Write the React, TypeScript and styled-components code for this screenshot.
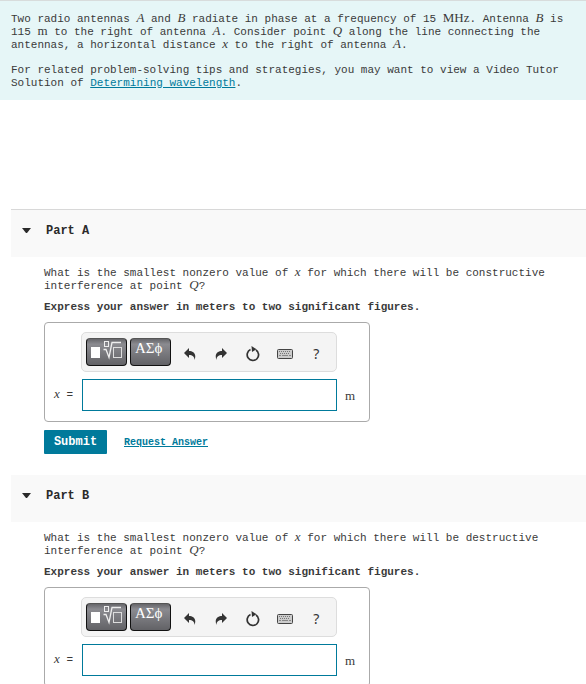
import React from "react";
import styled, { createGlobalStyle } from "styled-components";

const teal = "#007a9b";
const mono = `"Liberation Mono", "DejaVu Sans Mono", monospace`;
const serif = `"Liberation Serif", "Times New Roman", serif`;

const GlobalStyle = createGlobalStyle`
  *, *::before, *::after { box-sizing: border-box; }
  body {
    margin: 0;
    background: #fff;
    color: #3a3a3a;
    font-family: ${mono};
    font-size: 11px;
    line-height: 13px;
  }
  p, h2 { margin: 0; }
`;

const Page = styled.main`
  display: flex;
  flex-direction: column;
`;

const Intro = styled.section`
  display: flex;
  flex-direction: column;
  gap: 12px;
  padding: 12px 11px 10px;
  border-top: 1px solid #d8dcdc;
  background: #e6f6f7;
`;

const Link = styled.a`
  color: ${teal};
  text-decoration: underline;
`;

const Var = styled.i`
  font-family: ${serif};
  font-size: 13px;
  line-height: 1px;
`;

const Unit = styled.span`
  font-family: ${serif};
  font-size: 13px;
  line-height: 1px;
`;

const Parts = styled.div`
  display: flex;
  flex-direction: column;
  gap: 21px;
  margin-top: 109px;
  padding-left: 11px;
`;

const PartHeader = styled.header<{ $ruled?: boolean }>`
  padding: 14px 11px 19px;
  border-top: ${(p) => (p.$ruled ? "1px solid #d8d8d8" : "none")};
  background: #f9f9f9;
`;

const Toggle = styled.button`
  display: flex;
  align-items: center;
  gap: 15px;
  padding: 0;
  border: 0;
  background: none;
  color: #2a2a2a;
  font: bold 12px/14px ${mono};
  cursor: pointer;
`;

const PartBody = styled.div`
  display: flex;
  flex-direction: column;
  align-items: flex-start;
  padding: 10px 11px 0 33px;
`;

const Instruction = styled.p`
  margin: 8px 0;
  font-weight: bold;
`;

const AnswerBox = styled.div`
  display: grid;
  grid-template-columns: 28px minmax(0, 256px) 24px;
  row-gap: 7px;
  align-items: center;
  width: 100%;
  max-width: 326px;
  padding: 9px 8px 10px;
  border: 1px solid #aaa;
  border-radius: 4px;
`;

const Toolbar = styled.div`
  grid-column: 2 / 4;
  display: flex;
  align-items: flex-start;
  gap: 3px;
  height: 40px;
  margin-right: 24px;
  padding: 5px 4px;
  border: 1px solid #ddd;
  border-radius: 5px;
  background: #f4f4f4;
`;

const PaletteButton = styled.button`
  display: flex;
  justify-content: center;
  width: 41px;
  height: 28px;
  padding: 2px 0 0;
  border: 1px solid #111;
  border-top-color: #555;
  border-radius: 4px;
  background: linear-gradient(#66666a, #8b8b90 20%, #626266);
  color: #fff;
  font: 15px/16px ${serif};
`;

const GreekButton = styled(PaletteButton)`
  justify-content: flex-start;
  padding: 1px 0 0 4px;
`;

const ToolGroup = styled.div`
  flex: 1;
  display: grid;
  grid-template-columns: repeat(5, 1fr);
  align-items: center;
  justify-items: center;
  height: 32px;
`;

const Tool = styled.button`
  display: grid;
  place-items: center;
  width: 20px;
  height: 20px;
  padding: 0;
  border: 0;
  background: none;
  color: #333;
  font: 14px/18px "Noto Sans", sans-serif;
`;

const AnswerLabel = styled.label`
  padding-left: 1px;
  white-space: pre;
`;

const AnswerInput = styled.input`
  width: 100%;
  height: 32px;
  margin-left: 1px;
  max-width: 255px;
  padding: 0 8px;
  border: 1px solid ${teal};
  background: #fff;
  font: 14px ${serif};
  outline: none;
`;

const AnswerUnit = styled(Unit)`
  justify-self: end;
  padding-right: 6px;
`;

const Actions = styled.div`
  display: flex;
  align-items: center;
  gap: 17px;
  margin-top: 8px;
`;

const Submit = styled.button`
  width: 63px;
  height: 24px;
  padding: 0;
  border: 0;
  border-radius: 1px;
  background: ${teal};
  color: #fff;
  font: bold 12px/24px ${mono};
`;

const RequestLink = styled(Link)`
  font-size: 10px;
  font-weight: bold;
`;

const TemplateIcon = () => (
  <svg width="33" height="20" viewBox="0 0 33 20" fill="none" aria-hidden="true">
    <rect x="1" y="6" width="9" height="11" fill="#fff" />
    <path d="M13.500 8.500h2.500l3 8L22 1.500h9" stroke="#eee" strokeWidth="1.300" />
    <rect x="14.500" y=".5" width="4" height="5" stroke="#eee" />
    <rect x="23.500" y="6.500" width="8" height="10" stroke="#ddd" />
  </svg>
);

const UndoIcon = () => (
  <svg width="12" height="12" viewBox="0 0 12 12" aria-hidden="true">
    <path d="M5 0v3c4 0 8 2.500 5.500 9C10.500 8.500 8.500 7 5 7v3L0 5z" fill="currentColor" />
  </svg>
);

const RedoIcon = () => (
  <svg width="12" height="12" viewBox="0 0 12 12" aria-hidden="true">
    <path d="M7 0v3C3 3-1 5.500 1.500 12 1.500 8.500 3.500 7 7 7v3l5-5z" fill="currentColor" />
  </svg>
);

const ResetIcon = () => (
  <svg width="14" height="16" viewBox="0 0 14 16" aria-hidden="true">
    <path d="M10 4A5.700 5.700 0 1 1 4.500 3.600" fill="none" stroke="currentColor" strokeWidth="1.700" />
    <path d="M5.500 0l5 3.200-4.500 2.800z" fill="currentColor" />
  </svg>
);

const KeyboardIcon = () => (
  <svg width="16" height="10" viewBox="0 0 16 10" aria-hidden="true">
    <rect x=".5" y=".5" width="15" height="9" rx="1" fill="#ccc" stroke="#444" />
    <path d="M2 2.500h12M3 4.500h10" stroke="#777" strokeDasharray="1 1" />
    <path d="M2 6.500h2M5 6.500h6M12 6.500h2" stroke="#888" />
  </svg>
);

function AnswerForm({ id }: { id: string }) {
  return (
    <AnswerBox>
      <Toolbar role="toolbar" aria-label="Math tools">
        <PaletteButton type="button" aria-label="Templates">
          <TemplateIcon />
        </PaletteButton>
        <GreekButton type="button">ΑΣϕ</GreekButton>
        <ToolGroup>
          <Tool type="button" aria-label="Undo"><UndoIcon /></Tool>
          <Tool type="button" aria-label="Redo"><RedoIcon /></Tool>
          <Tool type="button" aria-label="Reset"><ResetIcon /></Tool>
          <Tool type="button" aria-label="Keyboard shortcuts"><KeyboardIcon /></Tool>
          <Tool type="button" aria-label="Help">?</Tool>
        </ToolGroup>
      </Toolbar>
      <AnswerLabel htmlFor={id}><Var>x</Var> =</AnswerLabel>
      <AnswerInput id={id} type="text" />
      <AnswerUnit>m</AnswerUnit>
    </AnswerBox>
  );
}

interface PartProps {
  letter: string;
  kind: string;
  ruled?: boolean;
  children?: React.ReactNode;
}

function Part({ letter, kind, ruled, children }: PartProps) {
  return (
    <section>
      <PartHeader $ruled={ruled}>
        <h2>
          <Toggle type="button" aria-expanded="true">
            <svg width="9" height="6" viewBox="0 0 9 6" aria-hidden="true">
              <path d="M0 0h9L5 5H4z" fill="currentColor" />
            </svg>
            Part {letter}
          </Toggle>
        </h2>
      </PartHeader>
      <PartBody>
        <p>
          What is the smallest nonzero value of <Var>x</Var> for which there will be {kind}{" "}
          interference at point <Var>Q</Var>?
        </p>
        <Instruction>Express your answer in meters to two significant figures.</Instruction>
        <AnswerForm id={`answer-${letter}`} />
        {children}
      </PartBody>
    </section>
  );
}

export default function App() {
  return (
    <Page>
      <GlobalStyle />
      <Intro>
        <p>
          Two radio antennas <Var>A</Var> and <Var>B</Var> radiate in phase at a frequency of 15{" "}
          <Unit>MHz</Unit>. Antenna <Var>B</Var> is 115 <Unit>m</Unit> to the right of antenna{" "}
          <Var>A</Var>. Consider point <Var>Q</Var> along the line connecting the antennas, a
          horizontal distance <Var>x</Var> to the right of antenna <Var>A</Var>.
        </p>
        <p>
          For related problem-solving tips and strategies, you may want to view a Video Tutor
          Solution of <Link href="#wavelength">Determining wavelength</Link>.
        </p>
      </Intro>
      <Parts>
        <Part letter="A" kind="constructive" ruled>
          <Actions>
            <Submit type="submit">Submit</Submit>
            <RequestLink href="#request">Request Answer</RequestLink>
          </Actions>
        </Part>
        <Part letter="B" kind="destructive" />
      </Parts>
    </Page>
  );
}
